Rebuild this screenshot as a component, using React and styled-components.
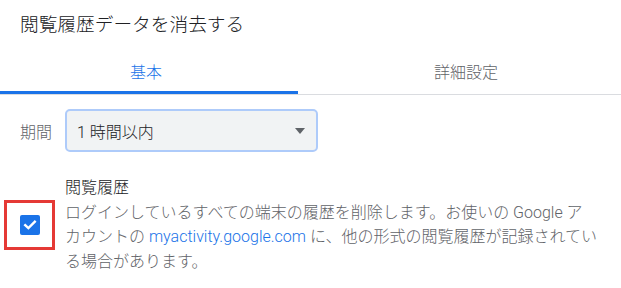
import React from 'react';
import styled, { createGlobalStyle } from 'styled-components';

const GlobalStyle = createGlobalStyle`
  html, body {
    margin: 0;
    padding: 0;
    background: #ffffff;
  }
  body {
    font-family: Roboto, "Noto Sans CJK JP", "Liberation Sans", sans-serif;
    font-weight: 300;
    color: #202124;
    overflow: hidden;
  }
`;

const Dialog = styled.div`
  width: 621px;
  height: 288px;
  display: flex;
  flex-direction: column;
`;

const Title = styled.h1`
  margin: 0;
  padding: 12px 20px 0;
  font-size: 18.7px;
  line-height: 26px;
  font-weight: 300;
  color: #202124;
`;

const TabBar = styled.div`
  display: flex;
  margin-top: 9px;
  border-bottom: 1px solid #dadce0;
`;

const Tab = styled.div`
  flex: ${(p) => (p.$grow ? '1' : '0 0 298px')};
  height: 47px;
  display: flex;
  align-items: center;
  justify-content: center;
  box-sizing: border-box;
  padding: ${(p) => p.$pad || '0'};
  font-size: 16px;
  color: ${(p) => (p.$active ? '#1a73e8' : '#5f6368')};
  box-shadow: ${(p) => (p.$active ? 'inset 0 -3px 0 #1a73e8' : 'none')};
`;

const Body = styled.div`
  display: flex;
  flex-direction: column;
`;

const PeriodRow = styled.div`
  display: flex;
  align-items: center;
  gap: 13px;
  padding-left: 20px;
  margin-top: 14px;
`;

const Label = styled.span`
  font-size: 16px;
  color: #5f6368;
`;

const Select = styled.div`
  width: 253px;
  height: 43px;
  box-sizing: border-box;
  border: 2px solid #aecbfa;
  border-radius: 5px;
  background: #f1f3f4;
  display: flex;
  align-items: center;
  justify-content: space-between;
  padding: 0 11px 0 10px;
  font-size: 16px;
  color: #202124;
`;

const Arrow = styled.span`
  width: 0;
  height: 0;
  border-left: 5.5px solid transparent;
  border-right: 5.5px solid transparent;
  border-top: 6px solid #5f6368;
`;

const CheckRow = styled.div`
  display: flex;
  align-items: center;
  gap: 10px;
  padding-left: 4px;
  margin-top: 24px;
`;

const Highlight = styled.div`
  width: 51px;
  height: 50px;
  box-sizing: border-box;
  border: 3px solid #e53935;
  display: flex;
  align-items: center;
  justify-content: center;
  flex-shrink: 0;
`;

const Box = styled.div`
  width: 20px;
  height: 20px;
  border-radius: 2px;
  background: #1a73e8;
  display: flex;
  align-items: center;
  justify-content: center;
`;

const Text = styled.div`
  font-size: 16px;
  line-height: 24.5px;
`;

const ItemTitle = styled.div`
  color: #202124;
`;

const Description = styled.div`
  color: #5f6368;
  white-space: nowrap;
`;

const Link = styled.a`
  color: #1a73e8;
  text-decoration: none;
`;

export default function App() {
  return (
    <>
      <GlobalStyle />
      <Dialog>
        <Title>閲覧履歴データを消去する</Title>
        <TabBar>
          <Tab $active $pad="0 6px 0 0">基本</Tab>
          <Tab $grow $pad="0 0 0 13px">詳細設定</Tab>
        </TabBar>
        <Body>
          <PeriodRow>
            <Label>期間</Label>
            <Select>
              <span>1 時間以内</span>
              <Arrow />
            </Select>
          </PeriodRow>
          <CheckRow>
            <Highlight>
              <Box>
                <svg width="14" height="14" viewBox="0 0 14 14">
                  <path d="M2.2 7.2 L5.4 10.2 L11.8 3.8" fill="none" stroke="#fff" strokeWidth="2.4" strokeLinecap="square" />
                </svg>
              </Box>
            </Highlight>
            <Text>
              <ItemTitle>閲覧履歴</ItemTitle>
              <Description>
                ログインしているすべての端末の履歴を削除します。お使いの Google ア
                <br />
                カウントの <Link href="#">myactivity.google.com</Link> に、他の形式の閲覧履歴が記録されてい
                <br />
                る場合があります。
              </Description>
            </Text>
          </CheckRow>
        </Body>
      </Dialog>
    </>
  );
}
